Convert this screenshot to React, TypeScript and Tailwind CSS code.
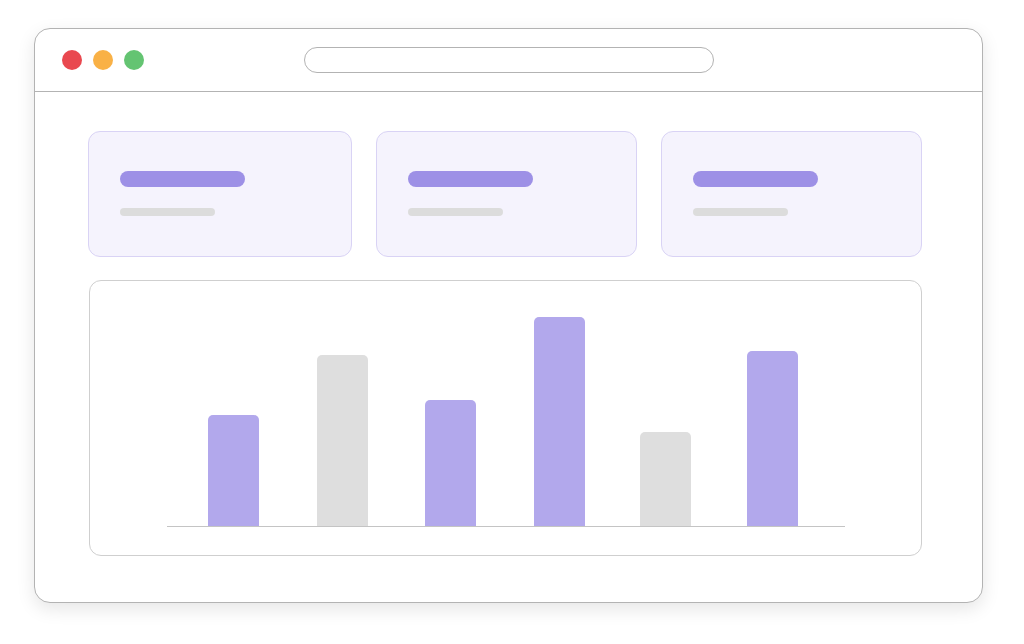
import React from "react";

type Bar = { h: number; accent: boolean; gap: string };

const bars: Bar[] = [
  { h: 111, accent: true, gap: "ml-[41px]" },
  { h: 171, accent: false, gap: "ml-[58px]" },
  { h: 126, accent: true, gap: "ml-[57px]" },
  { h: 209, accent: true, gap: "ml-[58px]" },
  { h: 94, accent: false, gap: "ml-[55px]" },
  { h: 175, accent: true, gap: "ml-[56px]" },
];

function StatCard() {
  return (
    <div className="h-[126px] rounded-[12px] border-[1.5px] border-[#d9d3f5] bg-[#f5f3fd] pl-[31px] pt-[39px]">
      <div className="h-[16px] w-[125px] rounded-full bg-[#9d90e6]" />
      <div className="mt-[21px] h-[8px] w-[95px] rounded-full bg-[#dcdcdc]" />
    </div>
  );
}

export default function App() {
  return (
    <div className="h-[644px] w-[1024px] bg-white pl-[34px] pt-[28px]">
      <div className="flex h-[575px] w-[949px] flex-col rounded-[16px] border-[1.5px] border-[#b3b3b3] bg-white shadow-[0_6px_18px_rgba(0,0,0,0.10)]">
        {/* title bar */}
        <div className="flex h-[63px] shrink-0 items-center border-b-[1.5px] border-[#b3b3b3] pl-[27px]">
          <div className="flex items-center gap-[11px]">
            <span className="h-[20px] w-[20px] rounded-full bg-[#e9484f]" />
            <span className="h-[20px] w-[20px] rounded-full bg-[#f9b146]" />
            <span className="h-[20px] w-[20px] rounded-full bg-[#64c472]" />
          </div>
          <div className="ml-[160px] h-[26px] w-[410px] rounded-full border-[1.5px] border-[#b3b3b3] bg-white" />
        </div>

        {/* body */}
        <div className="flex flex-1 flex-col pl-[53px] pr-[60px] pt-[39px]">
          <div className="grid grid-cols-[264px_261px_261px] gap-[24px]">
            <StatCard />
            <StatCard />
            <StatCard />
          </div>

          <div className="ml-[1px] mt-[23px] flex h-[276px] flex-col justify-end rounded-[12px] border-[1.5px] border-[#cfcfcf] bg-white pb-[28px] pl-[77px] pr-[76px]">
            <div className="flex items-end border-b-[1.5px] border-[#c4c4c4]">
              {bars.map((b, i) => (
                <div
                  key={i}
                  className={`${b.gap} w-[51px] rounded-t-[5px] ${
                    b.accent ? "bg-[#b2a8ec]" : "bg-[#dedede]"
                  }`}
                  style={{ height: b.h }}
                />
              ))}
            </div>
          </div>
        </div>
      </div>
    </div>
  );
}
